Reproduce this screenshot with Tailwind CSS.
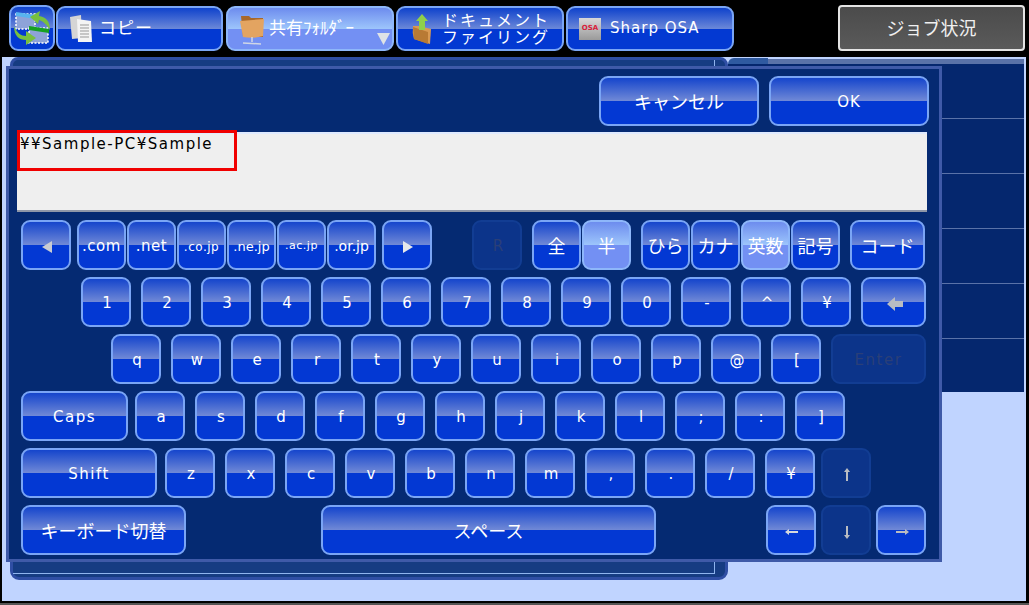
<!DOCTYPE html>
<html lang="ja">
<head>
  <meta charset="UTF-8">
  <meta name="viewport" content="width=device-width, initial-scale=1.0">
  <title>Keyboard</title>
  <script src="https://cdn.jsdelivr.net/npm/@tailwindcss/browser@4"></script>
</head>
<body class="bg-black w-[1029px] h-[605px] overflow-hidden relative font-['DejaVu_Sans','Noto_Sans_CJK_JP',sans-serif]">

  <!-- top tabs -->
  <div class="flex h-[57px] pt-[5px] pl-[9px]">
    <div class="w-[46px] h-[46px] rounded-[9px] border-2 border-[#7aa5f5] bg-[linear-gradient(180deg,#0f42cc_0%,#6a87d8_50%,#0339d2_50%,#0339d2_100%)] flex items-center justify-center">
      <svg width="40" height="40" viewBox="0 0 40 40">
        <rect x="4" y="6" width="19" height="15" fill="#8ea3d8" stroke="#fff" stroke-width="1.5" stroke-dasharray="2 1.5"/>
        <path d="M4 4 L24 7 L24 11 L4 8Z" fill="#58b4ef"/>
        <rect x="17" y="20" width="19" height="15" fill="#8ea3d8" stroke="#fff" stroke-width="1.5" stroke-dasharray="2 1.5"/>
        <path d="M17 18 L37 21 L37 25 L17 22Z" fill="#16a024"/>
        <path d="M38 22 C38 12 33 9 27 8 L28 3 L18 9 L26 16 L27 12 C31 13 34 16 38 22Z" fill="#78c040"/>
        <path d="M2 18 C2 28 7 32 14 32 L14 37 L24 30 L14 23 L14 28 C9 28 5 25 2 18Z" fill="#78c040"/>
      </svg>
    </div>
    <div class="ml-[1px] mt-[1px] w-[167px] h-[45px] rounded-[9px] border-2 border-[#7aa5f5] bg-[linear-gradient(180deg,#0f42cc_0%,#6a87d8_50%,#0339d2_50%,#0339d2_100%)] flex items-center pl-[10px] text-white text-[17px]">
      <svg width="26" height="30" viewBox="0 0 26 30">
        <path d="M2 3 L13 1 L14 24 L4 25Z" fill="#d5d5d5"/>
        <path d="M9 5 L23 7 L24 28 L10 28Z" fill="#f4f4f4"/>
        <path d="M12 11 H21 M12 14 H21 M12 17 H21 M12 20 H21 M12 23 H21" stroke="#999" stroke-width="1"/>
      </svg>
      <span class="ml-[5px] tracking-[1px]">コピー</span>
    </div>
    <div class="ml-[3px] mt-[1px] w-[168px] h-[45px] rounded-[9px] border-2 border-[#8eb7fa] bg-[linear-gradient(180deg,#6d8cee_0%,#9cc4fb_50%,#7390f3_50%,#7390f3_100%)] flex items-center pl-[11px] text-white text-[17px] relative">
      <svg width="26" height="32" viewBox="0 0 26 32">
        <path d="M2 3 H10 L12 5 H24 V24 H4Z" fill="#a8682a"/>
        <path d="M1 8 L25 6 L24 23 Q14 26 4 24Z" fill="#e3a461"/>
        <path d="M13 24 V29 M4 30 L22 31" stroke="#cfd6e6" stroke-width="1.5"/>
      </svg>
      <span class="ml-[4px] whitespace-nowrap">共有ﾌｫﾙﾀﾞｰ</span>
      <svg class="absolute right-[2px] bottom-[4px]" width="13" height="12" viewBox="0 0 13 12"><path d="M0 0 H13 L6.5 12Z" fill="#dfe3e6"/></svg>
    </div>
    <div class="ml-[2px] mt-[1px] w-[168px] h-[45px] rounded-[9px] border-2 border-[#7aa5f5] bg-[linear-gradient(180deg,#0f42cc_0%,#6a87d8_50%,#0339d2_50%,#0339d2_100%)] flex items-center pl-[12px] text-white">
      <svg width="24" height="32" viewBox="0 0 24 32">
        <path d="M9 13 L3 13 Q2 20 4 26 L20 31 L21 16Z" fill="#d99a52"/>
        <path d="M3 14 L18 19 V31 L4 26Z" fill="#b87a34"/>
        <path d="M12 1 L18 8 H15 V17 H9 V8 H6Z" fill="#8fd04a"/>
      </svg>
      <div class="ml-[8px] flex flex-col items-center text-[16px] leading-[17px] tracking-[2px] whitespace-nowrap">
        <span>ドキュメント</span>
        <span>ファイリング</span>
      </div>
    </div>
    <div class="ml-[2px] mt-[1px] w-[168px] h-[45px] rounded-[9px] border-2 border-[#7aa5f5] bg-[linear-gradient(180deg,#0f42cc_0%,#6a87d8_50%,#0339d2_50%,#0339d2_100%)] flex items-center pl-[11px] text-white text-[15px]">
      <div class="w-[22px] h-[22px] bg-[linear-gradient(180deg,#d8d8d8,#9a9a9a)] flex items-center justify-center text-[#d8203a] text-[7px] font-bold leading-none">OSA</div>
      <span class="ml-[9px] tracking-[1px] whitespace-nowrap">Sharp OSA</span>
    </div>
    <div class="ml-[104px] w-[187px] h-[46px] rounded-[4px] border-2 border-[#e4e4e4] bg-[linear-gradient(180deg,#4b4b4b,#5a5a5a)] flex items-center justify-center text-[#f0f0f0] text-[18px]">ジョブ状況</div>
  </div>

  <!-- screen behind the dialog -->
  <div class="flex ml-[2px] w-[1024px] h-[544px] bg-[#c0d4ff]">
    <div class="ml-[8px] w-[718px] h-[523px] bg-[#163c82] border-[3px] border-[#2f4ea4] rounded-t-[8px] rounded-b-[9px]">
      <div class="h-[514px] mr-[10px] border-b border-r border-[#8fb4ee]"></div>
    </div>
    <div class="w-[296px] h-[335px] flex flex-col">
      <div class="flex h-[7px] shrink-0">
        <div class="w-[40px] mt-[1px] bg-[#2f5aa0] rounded-tl-[8px]"></div>
        <div class="w-[10px] mt-[2px] bg-[#5a72a8]"></div>
        <div class="flex-1 border-t-[2px] border-[#c0d4ff] bg-[#5a72a8]"></div>
      </div>
      <div class="flex-1 bg-[#05276e] flex flex-col pt-[54px]">
        <div class="h-[1px] bg-[#5a72a8] mb-[54px]"></div>
        <div class="h-[1px] bg-[#5a72a8] mb-[54px]"></div>
        <div class="h-[1px] bg-[#5a72a8] mb-[54px]"></div>
        <div class="h-[1px] bg-[#5a72a8] mb-[54px]"></div>
        <div class="h-[1px] bg-[#5a72a8]"></div>
      </div>
    </div>
  </div>
  <div class="h-[2px] ml-[1px] bg-black"></div>
  <div class="h-[2px] bg-[#555]"></div>

  <!-- keyboard dialog -->
  <div id="dialog" class="absolute left-[6px] top-[66px] w-[936px] h-[496px] bg-[#052a72] border-[3px] border-[#3f5aa8]">
    <div class="flex justify-end pt-[7px] pr-[10px] gap-[10px]">
      <div class="w-[160px] h-[50px] pt-[3px] rounded-[9px] border-2 border-[#7aa5f5] bg-[linear-gradient(180deg,#1545cc_0%,#6f88d6_49%,#0338d3_49%,#0338d3_100%)] flex items-center justify-center text-white text-[18px]">キャンセル</div>
      <div class="w-[160px] h-[50px] pt-[3px] rounded-[9px] border-2 border-[#7aa5f5] bg-[linear-gradient(180deg,#1545cc_0%,#6f88d6_49%,#0338d3_49%,#0338d3_100%)] flex items-center justify-center text-white text-[15px] tracking-[1px]">OK</div>
    </div>
    <div class="relative ml-[8px] mt-[6px] w-[910px] h-[80px] bg-[#efefef] border-t-2 border-t-[#dfeaff] border-b-2 border-b-[#8f97a8] text-black text-[15px] tracking-[1.5px] leading-[20px] pl-[3px]">
      ¥¥Sample-PC¥Sample
      <div class="absolute left-0 top-[-4px] w-[220px] h-[41px] border-[3px] border-[#f00000]"></div>
    </div>
    <div id="keys" class="mt-[8px] pl-[12px] flex flex-col gap-[7px]"></div>
  </div>

  <script>
    const normal = 'border-[#7aa5f5] bg-[linear-gradient(180deg,#1545cc_0%,#6f88d6_49%,#0338d3_49%,#0338d3_100%)] text-white';
    const active = 'border-[#8eb7fa] bg-[linear-gradient(180deg,#6d8cee_0%,#9cc4fb_49%,#7390f3_49%,#7390f3_100%)] text-white';
    const off = 'border-[#123d93] bg-[#0c348a] text-[#2a3f78]';

    const ARROWS = {
      left: '<svg width="12" height="14" viewBox="0 0 12 14"><path d="M11 1 V13 L1 7Z" fill="#c9ccd2"/></svg>',
      right: '<svg width="12" height="14" viewBox="0 0 12 14"><path d="M1 1 V13 L11 7Z" fill="#e6e8ea"/></svg>',
      back: '<svg width="18" height="16" viewBox="0 0 18 16"><path d="M1 8 L9 1 V5 H17 V11 H9 V15Z" fill="#b9bcc2"/></svg>',
      up: '<svg width="8" height="14" viewBox="0 0 8 14"><path d="M4 0 L7 4 H5 V13 H3 V4 H1Z" fill="#b9bcc2"/></svg>',
      down: '<svg width="8" height="14" viewBox="0 0 8 14"><path d="M4 14 L7 10 H5 V1 H3 V10 H1Z" fill="#b9bcc2"/></svg>',
      thinLeft: '<svg width="14" height="8" viewBox="0 0 14 8"><path d="M0 4 L4 1 V3 H13 V5 H4 V7Z" fill="#d5d8dd"/></svg>',
      thinRight: '<svg width="14" height="8" viewBox="0 0 14 8"><path d="M14 4 L10 1 V3 H1 V5 H10 V7Z" fill="#b9bcc2"/></svg>'
    };

    // [label, width class, left margin class, size class, state]
    const w = 'w-[50px]', n = 'w-[49px]', s = 'text-[15px] pl-[2px]', j = 'text-[18px]', t = 'text-[15px] tracking-[1.5px]';
    const letters = (str, first) => str.split('').map((c, i) => [c, w, i === 0 ? first : 'ml-[10px]', s, normal]);

    const rows = [
      [
        [ARROWS.left, w, '', s, normal],
        ['.com', n, 'ml-[6px]', 'text-[15px] tracking-[0.5px]', normal],
        ['.net', n, 'ml-[1px]', 'text-[15px] tracking-[0.5px]', normal],
        ['.co.jp', n, 'ml-[1px]', 'text-[12px] tracking-[0.5px]', normal],
        ['.ne.jp', n, 'ml-[1px]', 'text-[13px]', normal],
        ['.ac.jp', n, 'ml-[1px]', 'text-[11px] tracking-[0.5px]', normal],
        ['.or.jp', n, 'ml-[1px]', 'text-[14px]', normal],
        [ARROWS.right, w, 'ml-[6px]', s, normal],
        ['R', w, 'ml-[40px]', s, off],
        ['全', n, 'ml-[10px]', j, normal],
        ['半', n, 'ml-[1px]', j, active],
        ['ひら', n, 'ml-[10px]', j, normal],
        ['カナ', n, 'ml-[1px]', j, normal],
        ['英数', n, 'ml-[1px]', j, active],
        ['記号', n, 'ml-[1px]', j, normal],
        ['コード', 'w-[75px]', 'ml-[10px]', j, normal]
      ],
      [
        ...letters('1234567890-^¥', 'ml-[60px]'),
        [ARROWS.back, 'w-[65px]', 'ml-[10px]', s, normal]
      ],
      [
        ...letters('qwertyuiop@[', 'ml-[90px]'),
        ['Enter', 'w-[95px]', 'ml-[10px]', t, off]
      ],
      [
        ['Caps', 'w-[107px]', '', t, normal],
        ...letters('asdfghjkl;:]', 'ml-[7px]')
      ],
      [
        ['Shift', 'w-[136px]', '', t, normal],
        ...letters('zxcvbnm,./¥', 'ml-[8px]'),
        [ARROWS.up, w, 'ml-[6px]', s, off]
      ],
      [
        ['キーボード切替', 'w-[165px]', '', j, normal],
        ['スペース', 'w-[335px]', 'ml-[135px]', j, normal],
        [ARROWS.thinLeft, w, 'ml-[110px]', s, normal],
        [ARROWS.down, w, 'ml-[5px]', s, off],
        [ARROWS.thinRight, w, 'ml-[5px]', s, normal]
      ]
    ];

    document.getElementById('keys').innerHTML = rows.map(row => `
      <div class="flex h-[50px]">
        ${row.map(([label, width, margin, size, state]) => `
          <div class="${width} ${margin} ${size} ${state} shrink-0 h-[50px] pt-[3px] rounded-[9px] border-2 flex items-center justify-center whitespace-nowrap">${label}</div>
        `).join('')}
      </div>
    `).join('');
  </script>
</body>
</html>
